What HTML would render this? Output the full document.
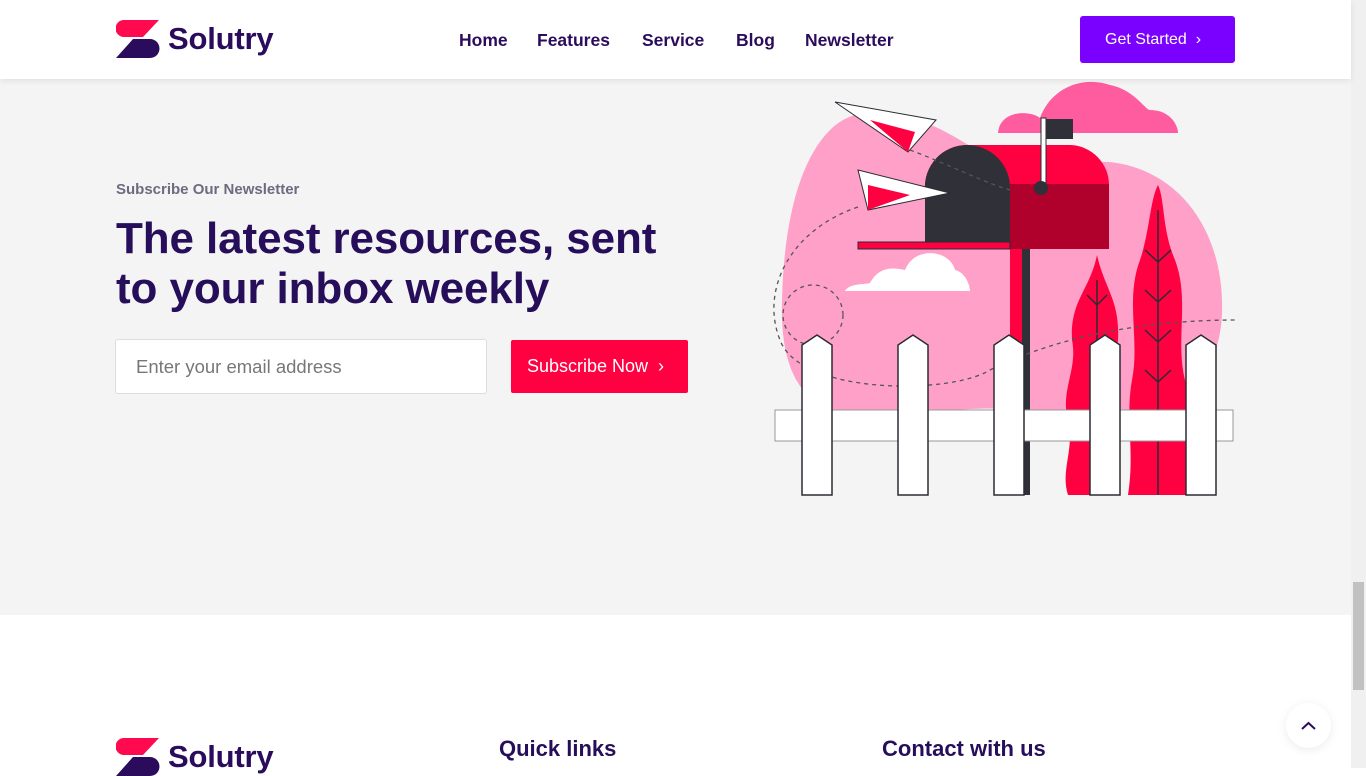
<!DOCTYPE html>
<html><head><meta charset="utf-8"><style>
*{margin:0;padding:0;box-sizing:border-box}
body{width:1366px;height:768px;overflow:hidden;font-family:"Liberation Sans",sans-serif;background:#fff;position:relative}
.hdr{position:absolute;left:0;top:0;width:1351px;height:79px;background:#fff;box-shadow:0 2px 6px rgba(0,0,0,.08);z-index:5}
.logo{position:absolute;display:flex;align-items:center}
.logo span{font-size:31px;font-weight:bold;color:#2b0c5c;margin-left:8px;letter-spacing:-.2px}
.nav{position:absolute;top:30px;left:459px;font-size:17.5px;font-weight:bold;color:#2b0c5c}
.nav a{position:absolute;white-space:nowrap}
.btn1{position:absolute;left:1080px;top:16px;width:155px;height:47px;background:#7a00ff;border-radius:3px;color:#fff;font-size:16px;line-height:47px;padding-left:25px}
.sec{position:absolute;left:0;top:79px;width:1351px;height:536px;background:#f4f4f4}
.sub{position:absolute;left:116px;top:181px;font-size:15px;font-weight:bold;color:#6e6a80}
h1{position:absolute;left:116px;top:214px;font-size:44px;line-height:50px;color:#260e5b;font-weight:bold;letter-spacing:-.1px}
.inp{position:absolute;left:115px;top:339px;width:372px;height:55px;background:#fff;border:1px solid #ddd;border-radius:3px;font-size:18.5px;color:#777;line-height:53px;padding-left:20px}
.btn2{position:absolute;left:511px;top:340px;width:177px;height:53px;background:#ff0040;border-radius:2px;color:#fff;font-size:18px;line-height:53px;padding-left:16px}
.sb{position:absolute;left:1351px;top:0;width:15px;height:768px;background:#f0f0f0}
.th{position:absolute;left:2px;top:582px;width:11px;height:108px;background:#c1c1c1}
.top{position:absolute;left:1286px;top:703px;width:45px;height:45px;border-radius:50%;background:#fff;box-shadow:0 2px 10px rgba(0,0,0,.08)}
.fh{position:absolute;top:736px;font-size:22px;font-weight:bold;color:#260e5b}
</style></head><body>
<div class="hdr">
 <div class="logo" style="left:116px;top:20px">
  <svg width="44" height="38" viewBox="0 0 44 38"><path d="M8 0H43L27 17H8A8 8 0 0 1 8 0Z" fill="#ff0a4e"/><path d="M17 19H34A9 9 0 0 1 34 38H0Z" fill="#2b0c5c"/></svg>
  <span>Solutry</span></div>
 <div class="nav"><a style="left:0">Home</a><a style="left:78px">Features</a><a style="left:183px">Service</a><a style="left:277px">Blog</a><a style="left:346px">Newsletter</a></div>
 <div class="btn1">Get Started &nbsp;›</div>
</div>
<div class="sec"></div>
<div class="sub">Subscribe Our Newsletter</div>
<h1>The latest resources, sent<br>to your inbox weekly</h1>
<div class="inp">Enter your email address</div>
<div class="btn2">Subscribe Now &nbsp;›</div>
<svg style="position:absolute;left:0;top:0" width="1351" height="615">
 <path d="M998 133C1000 110 1030 110 1040 118C1050 90 1080 75 1110 85C1135 90 1145 110 1150 110C1170 110 1178 125 1178 133Z" fill="#ff5ca0"/>
 <path d="M830 130C860 100 910 110 960 140C1000 165 1050 160 1110 162C1180 170 1220 230 1222 300C1224 360 1200 410 1100 420C1000 400 940 410 880 420C800 420 780 370 782 300C784 220 800 160 830 130Z" fill="#ffa0c8"/>
 <path d="M845 291C850 283 862 285 870 283C880 265 895 268 905 270C915 245 950 250 955 270C965 272 970 285 970 291Z" fill="#fff"/>
 <path d="M1068 495C1060 470 1075 450 1068 420C1060 390 1078 370 1072 340C1070 300 1090 290 1097 255C1105 290 1120 300 1118 340C1112 380 1125 420 1118 495Z" fill="#ff0040"/>
 <path d="M1128 495C1135 450 1125 420 1132 380C1140 340 1125 300 1140 260C1150 230 1150 200 1158 185C1165 200 1162 230 1175 260C1190 300 1175 340 1185 380C1195 420 1185 450 1190 495Z" fill="#ff0040"/>
 <g stroke="#2b2b33" stroke-width="1.5" fill="none"><path d="M1097 280V495M1158 210V495M1145 250L1158 262L1171 250M1145 290L1158 302L1171 290M1145 330L1158 342L1171 330M1145 370L1158 382L1171 370M1087 295L1097 305L1107 295"/></g>
 <rect x="1010" y="243" width="20" height="252" fill="#ff0040"/><rect x="1022" y="243" width="8" height="252" fill="#2f3038"/>
 <path d="M925 243V190A42 42 0 0 1 967 145H1070A40 40 0 0 1 1109 185V249H1010V243Z" fill="#ff0040"/>
 <rect x="1010" y="184" width="99" height="65" fill="#b0002c"/>
 <path d="M925 243V190A42 42 0 0 1 967 145A43 43 0 0 1 1010 190V243Z" fill="#2f3038"/>
 <rect x="858" y="242" width="152" height="7" fill="#ff0040" stroke="#2b2b33"/>
 <rect x="1041" y="118" width="5" height="70" fill="#fff" stroke="#2b2b33"/><rect x="1046" y="119" width="27" height="20" fill="#2f3038"/><circle cx="1041" cy="188" r="7" fill="#2f3038"/>
 <path d="M835 102L936 120L908 152Z" fill="#fff" stroke="#2b2b33"/><path d="M870 120L915 132L908 152Z" fill="#ff0040"/>
 <path d="M858 170L950 193L868 210Z" fill="#fff" stroke="#2b2b33"/><path d="M868 185L910 195L868 210Z" fill="#ff0040"/>
 <g stroke="#555" stroke-dasharray="4 4" fill="none" stroke-width="1.3"><path d="M910 150C950 165 990 185 1010 190"/><path d="M858 207C790 230 760 290 780 340C800 395 950 395 990 370C1060 335 1150 320 1236 320"/><circle cx="813" cy="315" r="30"/></g>
 <rect x="775" y="410" width="458" height="31" fill="#fff" stroke="#999"/>
 <g fill="#fff" stroke="#2b2b33" stroke-width="1.5"><path d="M802 495V345L817 335L832 345V495Z"/><path d="M898 495V345L913 335L928 345V495Z"/><path d="M994 495V345L1009 335L1024 345V495Z"/><path d="M1090 495V345L1105 335L1120 345V495Z"/><path d="M1186 495V345L1201 335L1216 345V495Z"/></g>
</svg>
<div class="logo" style="left:116px;top:738px">
  <svg width="44" height="38" viewBox="0 0 44 38"><path d="M8 0H43L27 17H8A8 8 0 0 1 8 0Z" fill="#ff0a4e"/><path d="M17 19H34A9 9 0 0 1 34 38H0Z" fill="#2b0c5c"/></svg>
  <span>Solutry</span></div>
<div class="fh" style="left:499px">Quick links</div>
<div class="fh" style="left:882px">Contact with us</div>
<div class="top"><svg width="45" height="45"><path d="M16 26L22.5 20L29 26" stroke="#2b0c5c" stroke-width="2" fill="none"/></svg></div>
<div class="sb"><div class="th"></div></div>
</body></html>
